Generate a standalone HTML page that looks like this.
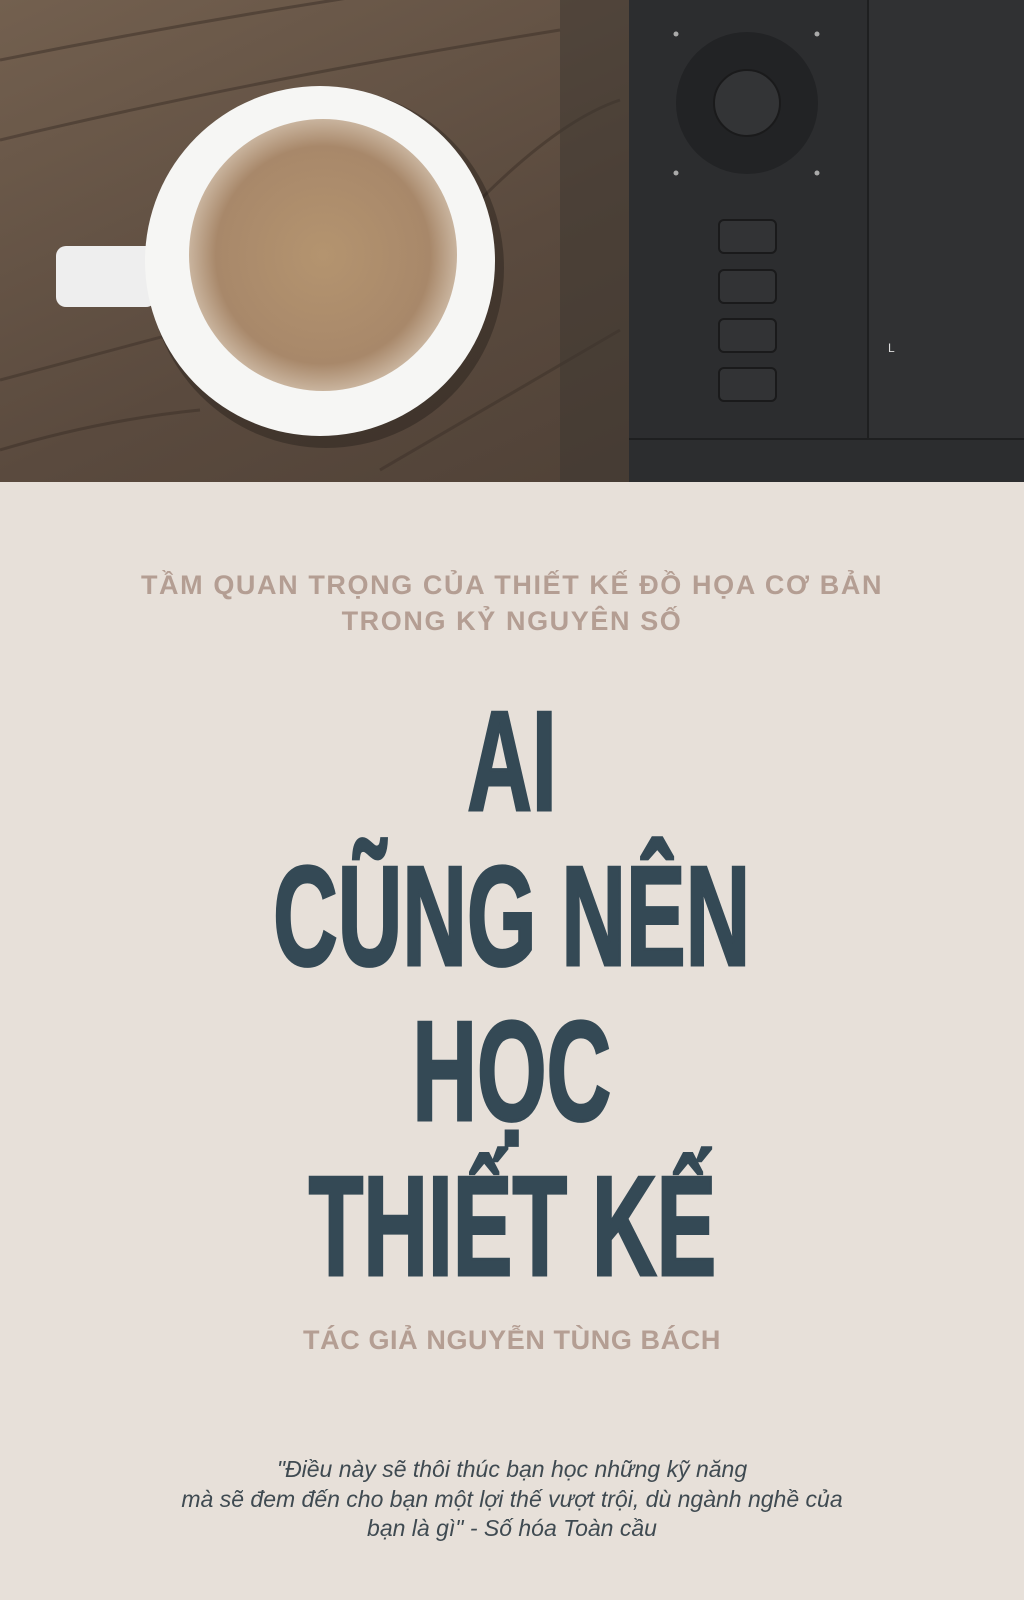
<!DOCTYPE html>
<html><head><meta charset="utf-8"><style>
html,body{margin:0;padding:0}
body{width:1024px;height:1600px;background:#e7e0d9;position:relative;overflow:hidden;font-family:"Liberation Sans",sans-serif}
.sub{position:absolute;left:0;width:1024px;text-align:center;color:#b49e93;font-weight:bold;font-size:27px;line-height:36px;white-space:nowrap}
.sub span,.t span,.q span{display:inline-block}
.t{position:absolute;left:0;width:1024px;text-align:center;color:#344955;font-weight:bold;font-size:142px;line-height:155px;white-space:nowrap}
.t span{transform:scaleX(0.63);-webkit-text-stroke:3px #344955}
.q{position:absolute;left:0;width:1024px;text-align:center;color:#3f4a51;font-style:italic;font-size:23px;line-height:29.5px;white-space:nowrap}
</style></head><body>
<svg width="1024" height="482" style="position:absolute;left:0;top:0" viewBox="0 0 1024 482">
<defs>
<linearGradient id="wood" x1="0" y1="0" x2="1" y2="1">
<stop offset="0" stop-color="#73604f"/><stop offset="0.5" stop-color="#5a4a3e"/><stop offset="1" stop-color="#4a3d33"/></linearGradient>
<radialGradient id="cof" cx="0.5" cy="0.5" r="0.5">
<stop offset="0" stop-color="#b4946f"/><stop offset="0.8" stop-color="#a8886a"/><stop offset="1" stop-color="#c9b49e"/></radialGradient>
</defs>
<rect width="1024" height="482" fill="url(#wood)"/>
<g stroke="#3b2f27" stroke-width="3" opacity="0.5" fill="none">
<path d="M0 60 Q200 20 400 -10"/><path d="M0 140 Q250 80 560 30"/><path d="M0 380 Q150 340 300 300"/><path d="M380 470 Q500 400 620 330"/><path d="M480 200 Q560 120 620 100"/><path d="M0 450 Q100 420 200 410"/>
</g>
<rect x="560" y="0" width="70" height="482" fill="#3c352f" opacity="0.5"/>
<rect x="629" y="0" width="395" height="482" fill="#2c2d2f"/>
<rect x="868" y="0" width="156" height="439" fill="#303133"/>
<line x1="868" y1="0" x2="868" y2="439" stroke="#1e1f20" stroke-width="2"/>
<line x1="629" y1="439" x2="1024" y2="439" stroke="#1e1f20" stroke-width="2"/>
<circle cx="747" cy="103" r="71" fill="#222325"/>
<circle cx="747" cy="103" r="33" fill="#333436" stroke="#1a1a1b" stroke-width="2"/>
<g fill="#aaa"><circle cx="676" cy="34" r="2.5"/><circle cx="817" cy="34" r="2.5"/><circle cx="676" cy="173" r="2.5"/><circle cx="817" cy="173" r="2.5"/></g>
<g fill="#323335" stroke="#1a1a1b" stroke-width="2">
<rect x="719" y="220" width="57" height="33" rx="5"/><rect x="719" y="270" width="57" height="33" rx="5"/><rect x="719" y="319" width="57" height="33" rx="5"/><rect x="719" y="368" width="57" height="33" rx="5"/></g>
<text x="888" y="352" fill="#ddd" font-size="12" font-family="Liberation Sans">L</text>
<ellipse cx="326" cy="268" rx="178" ry="180" fill="#000" opacity="0.25"/>
<rect x="56" y="246" width="100" height="61" rx="10" fill="#eeeeee"/>
<circle cx="320" cy="261" r="175" fill="#f6f6f4"/>
<ellipse cx="323" cy="255" rx="134" ry="136" fill="url(#cof)"/>
</svg>
<div class="sub" style="top:567px"><span style="letter-spacing:1.6px">TẦM QUAN TRỌNG CỦA THIẾT KẾ ĐỒ HỌA CƠ BẢN</span></div>
<div class="sub" style="top:603px"><span style="letter-spacing:1.6px">TRONG KỶ NGUYÊN SỐ</span></div>
<div class="t" style="top:684px"><span>AI</span></div>
<div class="t" style="top:839px"><span>CŨNG NÊN</span></div>
<div class="t" style="top:994px"><span>HỌC</span></div>
<div class="t" style="top:1149px"><span>THIẾT KẾ</span></div>
<div class="sub" style="top:1322px"><span style="letter-spacing:0.6px">TÁC GIẢ NGUYỄN TÙNG BÁCH</span></div>
<div class="q" style="top:1455px">"Điều này sẽ thôi thúc bạn học những kỹ năng</div>
<div class="q" style="top:1484.5px">mà sẽ đem đến cho bạn một lợi thế vượt trội, dù ngành nghề của</div>
<div class="q" style="top:1514px">bạn là gì" - Số hóa Toàn cầu</div>
</body></html>
